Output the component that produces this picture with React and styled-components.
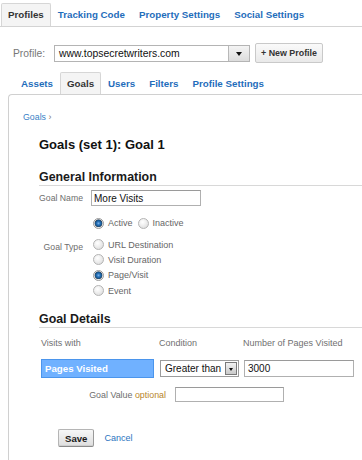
import React from "react";
import styled, { createGlobalStyle, css } from "styled-components";

const GlobalStyle = createGlobalStyle`
  html, body { margin: 0; padding: 0; background: #fff; }
  body {
    font-family: "Liberation Sans", Arial, sans-serif;
    color: #222;
    overflow: hidden;
  }
  * { box-sizing: border-box; }
`;

const Page = styled.div`
  width: 362px;
  height: 460px;
  display: flex;
  flex-direction: column;
`;

/* ---------- tab bars ---------- */
const TabBar = styled.div`
  display: flex;
  align-items: flex-end;
  padding-left: ${(p) => p.$indent}px;
  padding-top: ${(p) => p.$top}px;
  ${(p) =>
    p.$underline &&
    css`
      border-bottom: 1px solid #d3d3d3;
    `}
`;

const Tab = styled.div`
  font-size: 9.75px;
  font-weight: bold;
  line-height: ${(p) => p.$h}px;
  padding: 0 6px;
  border: 1px solid transparent;
  border-bottom: none;
  white-space: nowrap;
  color: #1f6dbb;
  ${(p) =>
    p.$active &&
    css`
      color: #333;
      background: #f4f4f4;
      border-color: #d6d6d6;
      border-top-left-radius: 2px;
      border-top-right-radius: 2px;
    `}
`;

/* ---------- profile row ---------- */
const ProfileRow = styled.div`
  display: flex;
  align-items: center;
  height: 20px;
  margin-top: 16px;
  padding-left: 13px;
`;

const ProfileLabel = styled.span`
  font-size: 10.3px;
  color: #777;
  width: 41px;
`;

const Dropdown = styled.div`
  display: flex;
  align-items: stretch;
  width: ${(p) => p.$w}px;
  height: ${(p) => p.$h}px;
  border: 1px solid ${(p) => p.$border || "#b4b4b4"};
  background: #fff;
`;

const DropdownValue = styled.div`
  flex: 1;
  font-size: ${(p) => p.$fs}px;
  color: #111;
  padding-left: ${(p) => p.$pad}px;
  display: flex;
  align-items: center;
  white-space: nowrap;
  overflow: hidden;
`;

const DropdownArrow = styled.div`
  width: ${(p) => p.$w}px;
  display: flex;
  align-items: center;
  justify-content: center;
  background: linear-gradient(#f4f4f4, #dcdcdc);
  border-left: 1px solid #b8b8b8;
  ${(p) =>
    p.$inset &&
    css`
      margin: 1px;
      border: 1px solid #7a7a7a;
      background: linear-gradient(#f2f2f2, #c9c9c9);
    `}
  &::after {
    content: "";
    border-left: ${(p) => p.$tri}px solid transparent;
    border-right: ${(p) => p.$tri}px solid transparent;
    border-top: ${(p) => p.$tri + 1}px solid #111;
    margin-top: 1px;
  }
`;

const Button = styled.button`
  font-family: "Liberation Sans", Arial, sans-serif;
  font-weight: bold;
  font-size: ${(p) => p.$fs}px;
  color: #333;
  height: ${(p) => p.$h}px;
  padding: 0 ${(p) => p.$px}px;
  margin-left: ${(p) => p.$ml || 0}px;
  border: 1px solid #c9c9c9;
  border-radius: 2px;
  background: linear-gradient(#fafafa, #e9e9e9);
  cursor: pointer;
  white-space: nowrap;
  ${(p) =>
    p.$primary &&
    css`
      color: #1a1a1a;
      border-color: #b5b5b5 #9a9a9a #8a8a8a #b5b5b5;
      background: linear-gradient(#f7f7f7, #dedede);
      box-shadow: inset 0 -1px 0 #cfcfcf;
    `}
`;

/* ---------- panel ---------- */
const Panel = styled.div`
  flex: 1;
  margin-left: 8px;
  border-left: 1px solid #d0d0d0;
  border-top: 1px solid #d0d0d0;
  border-top-left-radius: 4px;
  padding: 16px 0 0 14px;
`;

const Breadcrumb = styled.div`
  font-size: 8.8px;
  line-height: 12px;
  color: #777;
`;

const Link = styled.a`
  color: ${(p) => p.$color || "#3a7fc6"};
  font-size: ${(p) => p.$fs || 8.8}px;
  text-decoration: none;
  cursor: pointer;
`;

const Content = styled.div`
  margin-left: 16px;
`;

const Title = styled.h1`
  margin: 14px 0 0;
  font-size: 13px;
  line-height: 16px;
  font-weight: bold;
  color: #111;
`;

const SectionHeading = styled.h2`
  margin: ${(p) => p.$mt}px 0 0;
  font-size: 12.4px;
  line-height: 16px;
  font-weight: bold;
  color: #1a1a1a;
  border-bottom: 1px solid #d8d8d8;
`;

const FormRow = styled.div`
  display: flex;
  align-items: ${(p) => (p.$top ? "flex-start" : "center")};
  margin-top: ${(p) => p.$mt}px;
`;

const FieldLabel = styled.label`
  width: 44px;
  flex: none;
  margin-right: 8px;
  text-align: right;
  font-size: 8.7px;
  color: #6e6e6e;
  white-space: nowrap;
  ${(p) =>
    p.$offset &&
    css`
      padding-top: ${p.$offset}px;
    `}
`;

const TextInput = styled.div`
  width: ${(p) => p.$w}px;
  height: ${(p) => p.$h}px;
  border: 1px solid #b0b0b0;
  border-top-color: #9a9a9a;
  background: #fff;
  font-size: 10px;
  color: #111;
  padding-left: ${(p) => p.$pad || 3}px;
  display: flex;
  align-items: center;
  white-space: nowrap;
`;

const RadioGroup = styled.div`
  display: flex;
  flex-direction: ${(p) => (p.$column ? "column" : "row")};
  gap: ${(p) => (p.$column ? 0 : 5)}px;
  padding-left: 2px;
`;

const RadioOption = styled.div`
  display: flex;
  align-items: center;
  height: ${(p) => p.$h || 12}px;
  font-size: 9px;
  color: #666;
  white-space: nowrap;
`;

const Radio = styled.span`
  width: 11px;
  height: 11px;
  border-radius: 50%;
  margin-right: 4px;
  flex: none;
  border: 1px solid #b4b4b4;
  background: radial-gradient(circle at 40% 35%, #ffffff 0, #f0f0f0 40%, #d6d6d6 100%);
  ${(p) =>
    p.$checked &&
    css`
      border-color: #9a9a9a;
      background: radial-gradient(
        circle at 50% 48%,
        #7fb6ea 0,
        #2a74bd 1.6px,
        #16578f 3px,
        #3a4d62 3.6px,
        #ececec 4.2px,
        #d2d2d2 100%
      );
    `}
`;

/* ---------- goal details ---------- */
const DetailsGrid = styled.div`
  display: grid;
  grid-template-columns: 119px 84px 110px;
  margin-left: 2px;
  margin-top: 9px;
  row-gap: 10px;
  align-items: center;
`;

const ColHeader = styled.div`
  font-size: 9px;
  line-height: 12px;
  color: #707070;
  white-space: nowrap;
  margin-left: ${(p) => p.$ml || 0}px;
`;

const Highlight = styled.div`
  width: 113px;
  height: 19px;
  background: #70b1ff;
  border: 1px solid #4b95ec;
  color: #fff;
  font-weight: bold;
  font-size: 9.7px;
  display: flex;
  align-items: center;
  padding-left: 3px;
`;

const ValueRow = styled.div`
  display: flex;
  align-items: center;
  margin: 9px 0 0 2px;
`;

const ValueLabel = styled.div`
  width: 125px;
  margin-right: 9px;
  text-align: right;
  font-size: 8.9px;
  color: #6e6e6e;
  white-space: nowrap;
`;

const Optional = styled.span`
  color: #b8862b;
`;

const Actions = styled.div`
  display: flex;
  align-items: center;
  gap: 10px;
  margin: 27px 0 0 19px;
`;

export default function App() {
  return (
    <>
      <GlobalStyle />
      <Page>
        <TabBar $indent={1} $top={3} $underline>
          <Tab $h={22} $active>Profiles</Tab>
          <Tab $h={22}>Tracking Code</Tab>
          <Tab $h={22}>Property Settings</Tab>
          <Tab $h={22}>Social Settings</Tab>
        </TabBar>

        <ProfileRow>
          <ProfileLabel>Profile:</ProfileLabel>
          <Dropdown $w={196} $h={17}>
            <DropdownValue $fs={10.4} $pad={4}>www.topsecretwriters.com</DropdownValue>
            <DropdownArrow $w={21} $tri={3} />
          </Dropdown>
          <Button $fs={8.9} $h={20} $px={5} $ml={5}>+ New Profile</Button>
        </ProfileRow>

        <TabBar $indent={14} $top={9}>
          <Tab $h={21}>Assets</Tab>
          <Tab $h={21} $active>Goals</Tab>
          <Tab $h={21}>Users</Tab>
          <Tab $h={21}>Filters</Tab>
          <Tab $h={21}>Profile Settings</Tab>
        </TabBar>

        <Panel>
          <Breadcrumb>
            <Link>Goals</Link> ›
          </Breadcrumb>
          <Content>
            <Title>Goals (set 1): Goal 1</Title>

            <SectionHeading $mt={16}>General Information</SectionHeading>
            <FormRow $mt={4}>
              <FieldLabel>Goal Name</FieldLabel>
              <TextInput $w={110} $h={16} $pad={2}>More Visits</TextInput>
            </FormRow>

            <FormRow $mt={11}>
              <FieldLabel />
              <RadioGroup>
                <RadioOption><Radio $checked />Active</RadioOption>
                <RadioOption><Radio />Inactive</RadioOption>
              </RadioGroup>
            </FormRow>

            <FormRow $mt={8} $top>
              <FieldLabel $offset={5}>Goal Type</FieldLabel>
              <RadioGroup $column>
                <RadioOption $h={15.3}><Radio />URL Destination</RadioOption>
                <RadioOption $h={15.3}><Radio />Visit Duration</RadioOption>
                <RadioOption $h={15.3}><Radio $checked />Page/Visit</RadioOption>
                <RadioOption $h={15.3}><Radio />Event</RadioOption>
              </RadioGroup>
            </FormRow>

            <SectionHeading $mt={13}>Goal Details</SectionHeading>
            <DetailsGrid>
              <ColHeader>Visits with</ColHeader>
              <ColHeader $ml={-1}>Condition</ColHeader>
              <ColHeader $ml={-1}>Number of Pages Visited</ColHeader>

              <Highlight>Pages Visited</Highlight>
              <Dropdown $w={79} $h={17} $border="#9c9c9c">
                <DropdownValue $fs={10} $pad={4}>Greater than</DropdownValue>
                <DropdownArrow $w={12} $tri={2} $inset />
              </Dropdown>
              <TextInput $w={110} $h={17}>3000</TextInput>
            </DetailsGrid>

            <ValueRow>
              <ValueLabel>
                Goal Value <Optional>optional</Optional>
              </ValueLabel>
              <TextInput $w={109} $h={15} />
            </ValueRow>

            <Actions>
              <Button $primary $fs={9.6} $h={18} $px={6}>Save</Button>
              <Link $color="#2a74c0" $fs={9}>Cancel</Link>
            </Actions>
          </Content>
        </Panel>
      </Page>
    </>
  );
}
